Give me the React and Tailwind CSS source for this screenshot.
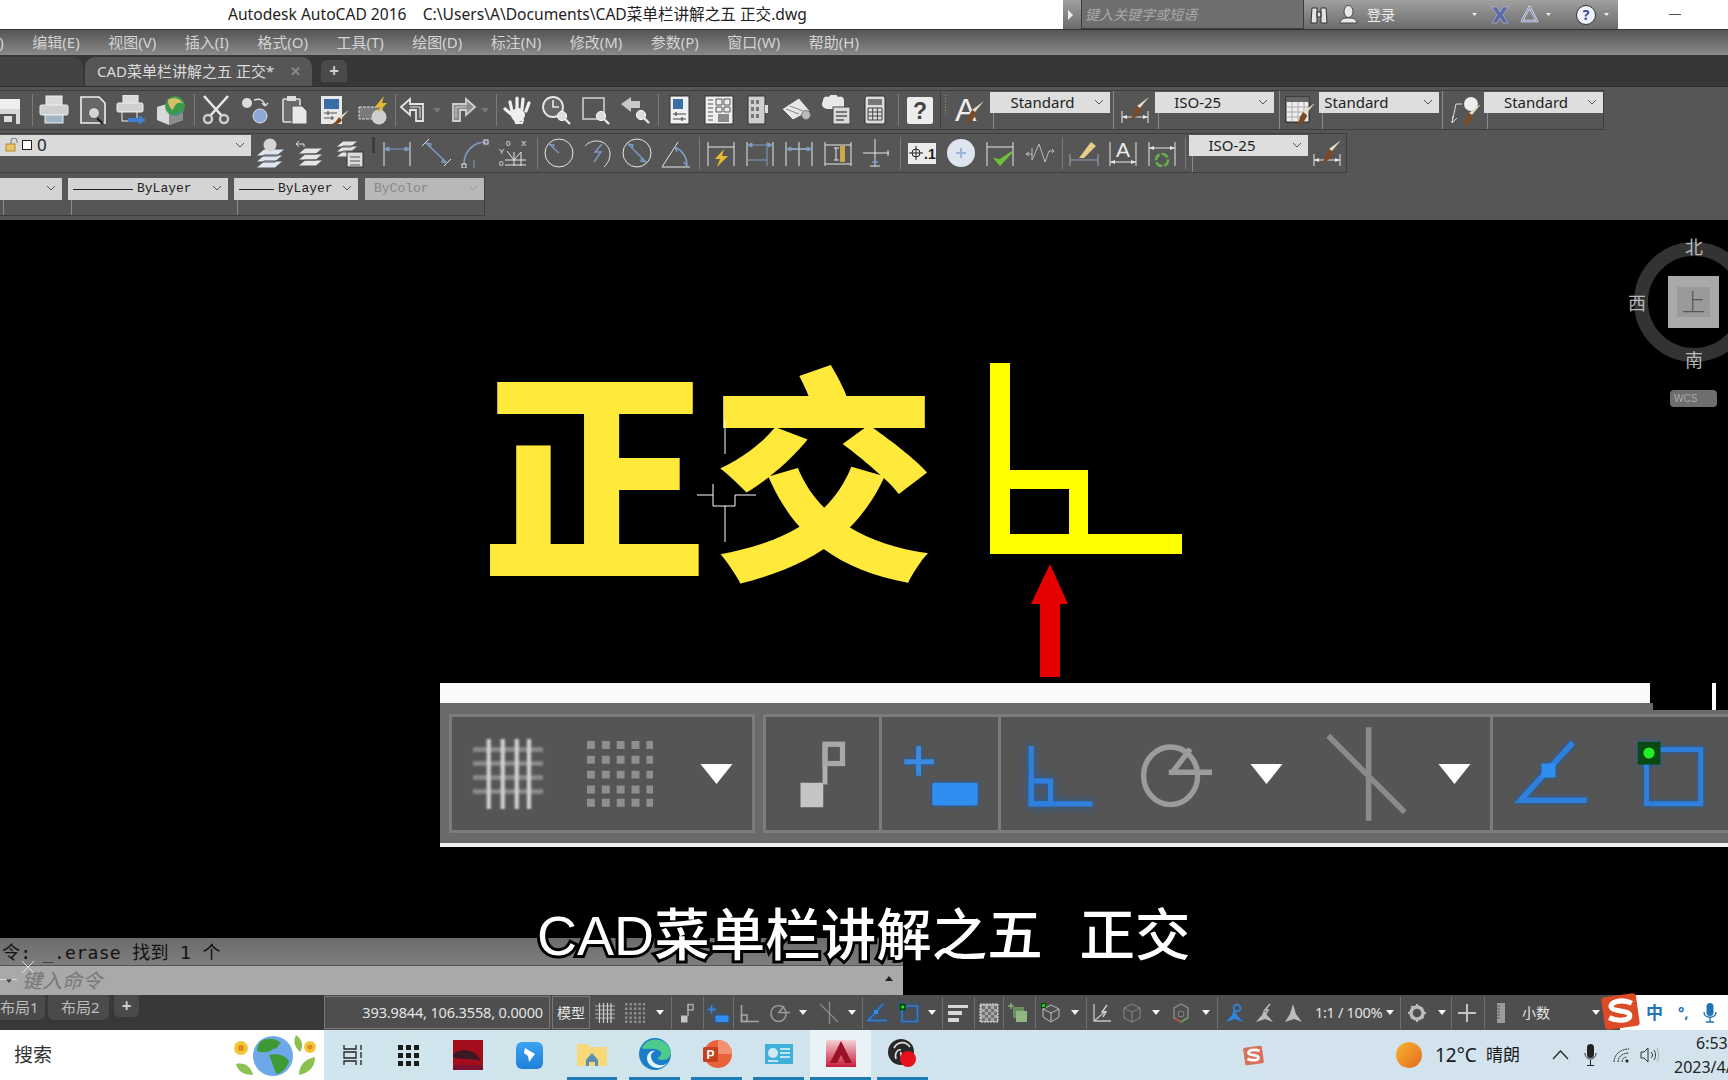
import React from "react";

const W = "#e6e6e6";
const BL = "#7f9cc4";

const Mag = ({ x = 20, y = 21 }) => (
  <>
    <path d={`M${x + 3} ${y + 3}l5 5`} stroke="#e8e8e8" strokeWidth="2.4" />
    <circle cx={x} cy={y} r="4.6" fill="#ddd" stroke="#fff" />
  </>
);
const Brush = ({ x = 0, y = 0 }) => (
  <g transform={`translate(${x} ${y})`}>
    <path d="M30 3l-9 11-3-2z" fill="#e8dcc4" />
    <path d="M18 12l4 3c-1 6-6 10-11 10 3-2 3-5 4-8z" fill="#7a4a26" />
  </g>
);
const Ext = ({ h = 28, c = W }) => (
  <path d={`M2 4V${h}M28 4V${h}`} stroke={c} strokeWidth="1" />
);
const Arrow = ({ y = 10, c = BL }) => (
  <path d={`M2 ${y}H28M2 ${y}l5-2v4zM28 ${y}l-5-2v4z`} stroke={c} fill={c} strokeWidth="1" />
);

const icons = {
  save: (
    <>
      <path d="M3 4H30V29H3z" fill="#d8d8d8" />
      <path d="M3 4H30V14H3z" fill="#efefef" />
      <rect x="6" y="19" width="20" height="10" fill="#555" />
      <rect x="14" y="21" width="8" height="6" fill="#ddd" />
    </>
  ),
  print: (
    <>
      <rect x="7" y="1" width="16" height="10" fill="#d9d9d9" stroke="#eee" />
      <rect x="1" y="10" width="28" height="10" rx="1.5" fill="#cfcfcf" stroke="#eee" />
      <rect x="6" y="20" width="18" height="8" fill="#9fb4c4" stroke="#eee" />
    </>
  ),
  preview: (
    <>
      <path d="M3 2H21L27 8V28H3z" fill="#676767" stroke="#eee" strokeWidth="1.6" />
      <path d="M19 23l6 6" stroke="#222" strokeWidth="2.4" />
      <circle cx="16" cy="18" r="5.5" fill="#d5d5d5" stroke="#555" />
    </>
  ),
  plot: (
    <>
      <rect x="7" y="0" width="15" height="9" fill="#d9d9d9" stroke="#eee" />
      <rect x="1" y="8" width="26" height="9" rx="1.5" fill="#cfcfcf" stroke="#eee" />
      <rect x="6" y="17" width="15" height="9" fill="#555" stroke="#eee" />
      <path d="M12 23H23V20L30 25 23 30V27H12z" fill="#3f7fce" />
    </>
  ),
  publish: (
    <>
      <path d="M1 12L14 8 27 14V25L13 30 1 25z" fill="#d9d9d9" />
      <path d="M13 18V30L27 25V14z" fill="#8d8d8d" />
      <circle cx="19" cy="11" r="10" fill="#3e9a4a" />
      <path d="M12 5c6-4 12-2 15 4-5-3-8 0-10 6-3-2-5-5-5-10z" fill="#d6c06a" />
      <path d="M14 19c5 2 10 0 13-5-1 5-7 9-13 5z" fill="#4a88cf" />
    </>
  ),
  cut: (
    <>
      <path d="M3 1L21 21M27 1L9 21" stroke="#e8e8e8" strokeWidth="2.6" />
      <circle cx="7" cy="24" r="4" stroke="#cfcfcf" strokeWidth="2.4" />
      <circle cx="23" cy="24" r="4" stroke="#cfcfcf" strokeWidth="2.4" />
    </>
  ),
  copy: (
    <>
      <circle cx="7" cy="8" r="5" fill="#dcdcdc" />
      <circle cx="20" cy="21" r="7" fill="#8eaad4" stroke="#d5e0f0" />
      <path d="M14 5c6-2 10 0 11 6M25 11l-3-3M25 11l3-3" stroke="#ddd" strokeWidth="1.4" />
    </>
  ),
  paste: (
    <>
      <rect x="3" y="4" width="17" height="23" rx="1" fill="#6c6c6c" stroke="#ddd" strokeWidth="1.6" />
      <rect x="7" y="1" width="9" height="5" fill="#ddd" />
      <path d="M12 11H22L27 16V29H12z" fill="#e8e8e8" stroke="#555" />
    </>
  ),
  match: (
    <>
      <rect x="2" y="1" width="21" height="28" fill="#e8e8e8" />
      <rect x="5" y="4" width="15" height="10" fill="#3a6ea8" />
      <path d="M5 18h13M5 23h10M9 16v4M13 21v4" stroke="#555" strokeWidth="1.2" />
      <path d="M30 15L22 24 20 22z" fill="#e8dcc4" />
      <path d="M20 22l3 3c-2 4-6 5-10 4 3-1 4-3 7-7z" fill="#7a4a26" />
    </>
  ),
  block: (
    <>
      <path d="M1 12H24V24H1z" fill="#7a7a7a" stroke="#ddd" strokeDasharray="3 1" />
      <circle cx="21" cy="22" r="7.5" fill="#cfcfcf" />
      <path d="M26 1L17 12H22L19 19 29 8H24z" fill="#e8b92f" />
    </>
  ),
  undo: (
    <>
      <path d="M2 12L11 4V9H24V26H17V15H11V20z" fill="#5f5f5f" stroke="#e4e4e4" strokeWidth="1.8" />
      <path d="M11 12H21V23" stroke="#e4e4e4" strokeWidth="1" />
    </>
  ),
  redo: (
    <>
      <path d="M28 12L19 4V9H6V26H13V15H19V20z" fill="#8b8b8b" stroke="#cfcfcf" strokeWidth="1.8" />
      <path d="M19 12H9V23" stroke="#cfcfcf" strokeWidth="1" />
    </>
  ),
  hand: (
    <g stroke="#f0f0f0" strokeLinecap="round" strokeWidth="3.2">
      <path d="M9 16L7 7M14 14V3M19 14L20 4M23 16L26 8M8 19L2 14" />
      <ellipse cx="15" cy="20" rx="6.5" ry="6.5" fill="#f0f0f0" strokeWidth="1" />
      <path d="M12 25l1 3h6l1-3" strokeWidth="2" />
    </g>
  ),
  rtzoom: (
    <>
      <circle cx="12" cy="12" r="10" fill="#666" stroke="#e8e8e8" strokeWidth="1.8" />
      <path d="M12 5V12H18" stroke="#e8e8e8" strokeWidth="1.6" />
      <Mag x={21} y={21} />
    </>
  ),
  winzoom: (
    <>
      <rect x="2" y="3" width="21" height="21" stroke="#ddd" strokeWidth="1.4" />
      <Mag x={20} y={21} />
    </>
  ),
  prevzoom: (
    <>
      <path d="M1 9L11 2V6H20V13H11V17z" fill="#c8c8c8" />
      <Mag x={21} y={20} />
    </>
  ),
  props: (
    <>
      <rect x="6" y="1" width="19" height="28" fill="#f0f0f0" stroke="#333" />
      <rect x="9" y="4" width="10" height="10" fill="#3a6ea8" />
      <path d="M9 19h13M9 24h13M12 17v4M18 22v4" stroke="#444" strokeWidth="1.2" />
    </>
  ),
  dc: (
    <>
      <rect x="1" y="1" width="28" height="28" fill="#eee" stroke="#333" />
      <path d="M4 5h5M4 9h5M4 13h5M4 17h5M4 21h5M4 25h5" stroke="#555" />
      <path d="M12 4h6v6h-6zM20 4h6v6h-6zM12 12h6v5h-6zM20 12h6v5h-6z" stroke="#555" />
      <rect x="14" y="19" width="11" height="8" fill="#8a8a8a" />
    </>
  ),
  palette: (
    <>
      <rect x="5" y="1" width="17" height="28" fill="#cfcfcf" stroke="#333" />
      <path d="M8 5h3v4H8zM13 5h3v4h-3zM8 12h3v4H8zM13 12h3v4h-3zM8 19h3v4H8zM13 19h3v4h-3z" fill="#777" />
      <path d="M22 10h3v8h-3z" fill="#ddd" />
    </>
  ),
  sheet: (
    <>
      <path d="M1 14L18 3 29 16 12 25z" fill="#e6e6e6" stroke="#555" />
      <circle cx="25" cy="20" r="4.4" fill="#bdbdbd" stroke="#777" />
      <path d="M5 14l13 5M9 11l13 5" stroke="#888" />
    </>
  ),
  markup: (
    <>
      <path d="M2 6a4 4 0 0 1 6-4 5 5 0 0 1 9 0 4 4 0 0 1 6 4v8H6a5 5 0 0 1-4-8z" fill="#e8e8e8" />
      <rect x="12" y="12" width="17" height="17" fill="#dadada" stroke="#444" />
      <path d="M15 17h11M15 21h11M15 25h8" stroke="#555" strokeWidth="1.4" />
    </>
  ),
  calc: (
    <>
      <rect x="5" y="1" width="20" height="28" rx="2" fill="#dcdcdc" stroke="#333" />
      <rect x="8" y="4" width="14" height="6" fill="#777" />
      <path d="M8 13h14v12H8zM8 17h14M8 21h14M12.7 13v12M17.4 13v12" stroke="#444" />
    </>
  ),
  help: (
    <>
      <rect x="2" y="2" width="26" height="27" rx="2" fill="#ececec" />
      <text x="15" y="24" textAnchor="middle" fontSize="23" fontWeight="700" fill="#444" fontFamily="Liberation Sans">?</text>
    </>
  ),
  astyle: (
    <>
      <text x="1" y="26" fontSize="32" fill="#f0f0f0" fontFamily="Liberation Sans">A</text>
      <Brush x={0} y={3} />
    </>
  ),
  dimbrush: (
    <>
      <path d="M2 16V28M28 16V28M2 22H28" stroke={W} />
      <path d="M2 22l5-2v4zM28 22l-5-2v4z" fill={W} />
      <Brush x={-1} y={-1} />
    </>
  ),
  table: (
    <>
      <rect x="2" y="2" width="23" height="25" fill="#eee" stroke="#222" />
      <rect x="2" y="2" width="23" height="5" fill="#666" />
      <path d="M2 12H25M2 17H25M2 22H25M8 7V27M14 7V27M20 7V27" stroke="#aaa" />
      <Brush x={1} y={5} />
    </>
  ),
  mleader: (
    <>
      <path d="M12 9H6L2 28M2 28l1-7M2 28l5-5" stroke="#ddd" />
      <circle cx="21" cy="9" r="7" fill="#eee" />
      <Brush x={1} y={6} />
    </>
  ),
  lay1: (
    <>
      <path d="M9 11H30L22 18H1zM9 17H28L20 24H1zM9 23H28L20 30H1z" fill="#dde6f0" stroke="#555" />
      <circle cx="15" cy="7" r="6.500" fill="#d4d4d4" />
    </>
  ),
  lay2: (
    <>
      <path d="M10 10H28L21 16H3zM10 16H28L21 22H3zM10 22H28L21 28H3z" fill="#e6e6e6" stroke="#555" />
      <path d="M1 6H9V9M1 6l3-3M1 6l3 3" stroke="#ddd" />
    </>
  ),
  lay3: (
    <>
      <path d="M9 3H24L17 9H2zM9 8H24L17 14H2zM9 13H20L15 19H2z" fill="#e6e6e6" stroke="#555" />
      <rect x="13" y="14" width="16" height="15" fill="#dcdcdc" stroke="#333" />
      <path d="M16 19h10M16 23h10M16 27h10" stroke="#555" />
    </>
  ),
  dimlin: (
    <>
      <Ext />
      <Arrow y={11} />
    </>
  ),
  dimali: (
    <>
      <path d="M1 8L8 1M23 28L30 21" stroke={W} />
      <path d="M5 5L26 25M5 5l5 1-1 3M26 25l-5-1 1-3" stroke={BL} strokeWidth="1.4" />
    </>
  ),
  dimarc: (
    <>
      <path d="M4 26C4 13 14 4 26 4" stroke={BL} strokeWidth="1.6" />
      <rect x="24" y="2" width="4" height="4" stroke={W} />
      <rect x="2" y="26" width="4" height="4" stroke={W} />
      <path d="M14 22V30" stroke={BL} />
    </>
  ),
  dimord: (
    <>
      <path d="M6 22H27M6 27H27M15 14V28M22 14V28M8 13L15 22L22 14" stroke={W} />
      <text x="7" y="8" fontSize="8" fill={W} fontFamily="Liberation Sans">0</text>
      <text x="22" y="8" fontSize="8" fill={W} fontFamily="Liberation Sans">X</text>
      <text x="0" y="16" fontSize="8" fill={W} fontFamily="Liberation Sans">Y</text>
      <text x="0" y="28" fontSize="8" fill={W} fontFamily="Liberation Sans">0</text>
    </>
  ),
  dimrad: (
    <>
      <circle cx="15" cy="15" r="14" stroke={W} />
      <path d="M15 15L5 6M5 6l5 1-1 3" stroke={BL} strokeWidth="1.2" />
    </>
  ),
  dimjog: (
    <>
      <path d="M3 8C10 0 26 1 28 15C28 21 26 25 22 29" stroke={W} />
      <path d="M20 6L13 14H19L12 24" stroke={BL} strokeWidth="1.4" />
    </>
  ),
  dimdia: (
    <>
      <circle cx="15" cy="15" r="14" stroke={W} />
      <path d="M6 6L24 24M6 6l5 1-1 3M24 24l-5-1 1-3" stroke={BL} strokeWidth="1.4" />
    </>
  ),
  dimang: (
    <>
      <path d="M1 29H29M1 29L17 4" stroke={W} />
      <path d="M14 9C22 13 26 20 26 28M14 9l2 5M26 28l-3-4" stroke={BL} strokeWidth="1.4" />
    </>
  ),
  dimqk: (
    <>
      <Ext />
      <path d="M2 9H28" stroke={W} />
      <path d="M18 11L9 21H14L11 29 22 18H16z" fill="#e8b92f" />
    </>
  ),
  dimbase: (
    <>
      <Ext />
      <Arrow y={7} />
      <path d="M2 22H22M22 4V28" stroke={BL} />
    </>
  ),
  dimcont: (
    <>
      <path d="M2 4V28M15 4V28M28 4V28M2 11H28" stroke={W} />
      <Arrow y={11} />
    </>
  ),
  dimspace: (
    <>
      <Ext />
      <path d="M2 7H28M2 26H28" stroke={W} />
      <rect x="17" y="8" width="5" height="16" fill="#c9a94a" />
      <path d="M11 10h5M11 22h5M13 10v12" stroke={W} />
    </>
  ),
  dimbreak: (
    <>
      <path d="M13 1V29M1 15H27M26 12v6M8 28h10" stroke={W} />
      <path d="M13 20v8M10 24h6" stroke={BL} strokeWidth="1.4" />
    </>
  ),
  tol: (
    <>
      <rect x="1" y="5" width="28" height="21" fill="#ececec" />
      <circle cx="9" cy="15" r="4" stroke="#222" />
      <path d="M2 15H16M9 8V22" stroke="#222" />
      <text x="17" y="21" fontSize="14" fontWeight="700" fill="#222" fontFamily="Liberation Sans">.1</text>
    </>
  ),
  center: (
    <>
      <circle cx="15" cy="15" r="14" fill="#dfe5ee" />
      <path d="M15 10V20M10 15H20" stroke="#9cb6dc" strokeWidth="2" />
    </>
  ),
  dimchk: (
    <>
      <Ext />
      <path d="M2 9H28" stroke={W} />
      <path d="M10 21L15 27L27 14L15 22z" fill="#6fbf3c" stroke="#6fbf3c" strokeWidth="1.6" />
    </>
  ),
  dimzag: <path d="M1 16H7M4 14L1 16L4 18M7 10V22L14 6L20 24L24 13H29M27 11l2 2-2 2" stroke="#bbb" />,
  dimedit: (
    <>
      <path d="M1 16V28M29 16V28M1 22H29" stroke="#8fa2b8" />
      <path d="M10 20L22 4L27 8L15 20z" fill="#e8cf88" />
    </>
  ),
  dima: (
    <>
      <Ext />
      <path d="M2 24H28" stroke={W} />
      <path d="M2 24l5-2v4zM28 24l-5-2v4z" fill={W} />
      <text x="15" y="19" textAnchor="middle" fontSize="21" fill="#eee" fontFamily="Liberation Sans">A</text>
    </>
  ),
  dimnext: (
    <>
      <Ext />
      <path d="M2 10H28" stroke={W} />
      <path d="M2 10l5-2v4zM28 10l-5-2v4z" fill={W} />
      <circle cx="15" cy="22" r="6" stroke="#63b050" strokeWidth="2.6" strokeDasharray="7 2" />
    </>
  ),
  brushdim: (
    <>
      <path d="M2 16V28M28 16V28M2 22H28" stroke={W} />
      <path d="M2 22l5-2v4zM28 22l-5-2v4z" fill={W} />
      <Brush x={-1} y={-1} />
    </>
  ),
};

const row1 = [
  ["-ml-[10px]", "save"], ["ml-[12px]", "|"], ["ml-[6px]", "print"], ["ml-[9px]", "preview"], ["ml-[8px]", "plot"],
  ["ml-[10px]", "publish"], ["ml-[8px]", "|"], ["ml-[6px]", "cut"], ["ml-[9px]", "copy"], ["ml-[10px]", "paste"],
  ["ml-[9px]", "match"], ["ml-[9px]", "block"], ["ml-[7px]", "|"], ["ml-[3px]", "undo"], ["ml-[4px]", "v"],
  ["ml-[6px]", "redo"], ["ml-[4px]", "v"], ["ml-[7px]", "|"], ["ml-[6px]", "hand"], ["ml-[8px]", "rtzoom"],
  ["ml-[10px]", "winzoom"], ["ml-[9px]", "prevzoom"], ["ml-[8px]", "|"], ["ml-[5px]", "props"], ["ml-[10px]", "dc"],
  ["ml-[9px]", "palette"], ["ml-[8px]", "sheet"], ["ml-[10px]", "markup"], ["ml-[9px]", "calc"], ["ml-[8px]", "|"],
  ["ml-[6px]", "help"],
];

const row2 = [
  ["ml-[4px]", "lay1"], ["ml-[10px]", "lay2"], ["ml-[9px]", "lay3"],
];

const row2b = [
  ["ml-[7px]", "dimlin"], ["ml-[9px]", "dimali"], ["ml-[9px]", "dimarc"], ["ml-[9px]", "dimord"], ["ml-[8px]", "|"],
  ["ml-[6px]", "dimrad"], ["ml-[8px]", "dimjog"], ["ml-[10px]", "dimdia"], ["ml-[9px]", "dimang"], ["ml-[8px]", "|"],
  ["ml-[6px]", "dimqk"], ["ml-[9px]", "dimbase"], ["ml-[9px]", "dimcont"], ["ml-[9px]", "dimspace"], ["ml-[9px]", "dimbreak"],
  ["ml-[8px]", "|"], ["ml-[6px]", "tol"], ["ml-[9px]", "center"], ["ml-[9px]", "dimchk"], ["ml-[10px]", "dimzag"],
  ["ml-[7px]", "|"], ["ml-[6px]", "dimedit"], ["ml-[9px]", "dima"], ["ml-[9px]", "dimnext"], ["ml-[8px]", "|"],
];

const Tri = ({ c = "", fill = "#f4f4f4" }) => (
  <svg viewBox="0 0 8 5" className={`shrink-0 w-[8px] h-[5px] ${c}`}>
    <path d="M0 0H8L4 5z" fill={fill} />
  </svg>
);

const Tool = ({ m, k }) => {
  if (k === "|") return <div className={`${m} shrink-0 w-px h-[32px] bg-[#7a7a7a]`} />;
  if (k === "v") return <Tri c={m} fill="#777" />;
  return (
    <svg viewBox="0 0 30 30" fill="none" className={`${m} shrink-0 w-[30px] h-[30px]`}>
      {icons[k]}
    </svg>
  );
};

const Chevron = ({ dim }) => (
  <svg viewBox="0 0 10 6" fill="none" className="absolute right-[6px] top-[7px] w-[10px] h-[6px]">
    <path d="M1 1L5 5L9 1" stroke={dim ? "#999" : "#555"} />
  </svg>
);

const Combo = ({ c, label, align = "justify-center pr-[15px]", lineX = "ml-[3px]" }) => (
  <div className={`${c} shrink-0 h-full flex flex-col`}>
    <div className={`relative h-[21px] mt-px bg-[#dedede] flex items-center ${align} text-[15px] text-[#222]`}>
      {label}
      <Chevron />
    </div>
    <div className={`${lineX} w-px flex-1 bg-[#8a8a8a]`} />
  </div>
);

const LineCombo = ({ c, line, text }) => (
  <div className={`${c} shrink-0 h-full flex flex-col`}>
    <div className="relative h-[22px] mt-[2px] bg-[#d4d4d4] flex items-center pl-[5px] text-[13px] text-[#222] [font-family:'Liberation_Mono',monospace]">
      <div className={`${line} h-px bg-[#222] mr-[4px]`} />
      {text}
      <Chevron />
    </div>
    <div className="ml-[3px] w-px flex-1 bg-[#8a8a8a]" />
  </div>
);

/* status bar drawings, shared with the enlarged strip */
const GridIcon = ({ c }) => (
  <svg viewBox="0 0 20 20" fill="none" className={c}>
    <path d="M0 3H20M0 7H20M0 11H20M0 15H20" stroke="#8e8e8e" strokeWidth="1.3" />
    <path d="M4.5 0V20M8.5 0V20M12.5 0V20M16 0V20" stroke="#d0d0d0" strokeWidth="1.2" />
  </svg>
);
const DotsIcon = ({ c }) => (
  <svg viewBox="0 0 20 20" className={c}>
    <path fill="#8f8f8f" d="M0 0h2.400v2.400H0zM4.500 0h2.400v2.400H4.500zM9 0h2.400v2.400H9zM13.500 0h2.400v2.400h-2.400zM18 0h2v2.400h-2zM0 4.500h2.400v2.400H0zM4.500 4.500h2.400v2.400H4.500zM9 4.500h2.400v2.400H9zM13.500 4.500h2.400v2.400h-2.400zM18 4.500h2v2.400h-2zM0 9h2.400v2.400H0zM4.500 9h2.400v2.400H4.500zM9 9h2.400v2.400H9zM13.500 9h2.400v2.400h-2.400zM18 9h2v2.400h-2zM0 13.500h2.400v2.400H0zM4.500 13.500h2.400v2.400H4.500zM9 13.500h2.400v2.400H9zM13.500 13.500h2.400v2.400h-2.400zM18 13.500h2v2.400h-2zM0 17.500h2.400v2.400H0zM4.500 17.500h2.400v2.400H4.500zM9 17.500h2.400v2.400H9zM13.500 17.500h2.400v2.400h-2.400zM18 17.500h2v2.400h-2z" />
  </svg>
);
const SnapIcon = ({ c }) => (
  <svg viewBox="0 0 20 20" fill="none" className={c}>
    <rect x="3" y="12.5" width="6.5" height="7" fill="#c4c4c4" />
    <path d="M10 13V2" stroke="#b0b0b0" strokeWidth="1.4" />
    <rect x="10" y="1.5" width="5" height="5.5" stroke="#a8a8a8" strokeWidth="1.5" />
  </svg>
);
const DynIcon = ({ c }) => (
  <svg viewBox="0 0 22 20" fill="none" className={`${c} drop-shadow-[0_0_2px_#1a5fb0]`}>
    <path d="M4.6 2V10.5M0.5 6.5H9" stroke="#3a8be0" strokeWidth="1.4" />
    <rect x="8.5" y="12.5" width="13" height="6.5" rx="0.6" fill="#2f8ef0" />
  </svg>
);
const OrthoIcon = ({ c, color = "#2f7fdc", glow = "" }) => (
  <svg viewBox="0 0 20 20" fill="none" stroke={color} strokeWidth="1.5" className={`${c} ${glow}`}>
    <path d="M1.5 2V18.5H19" />
    <rect x="1.5" y="12" width="5.5" height="6.500" />
  </svg>
);
const PolarIcon = ({ c }) => (
  <svg viewBox="0 0 20 20" fill="none" stroke="#9c9c9c" strokeWidth="1.5" className={c}>
    <ellipse cx="8.5" cy="10.5" rx="7.5" ry="8" />
    <path d="M8 9.5H20M9 9.5L14 3" />
  </svg>
);
const CrossIcon = ({ c }) => (
  <svg viewBox="0 0 20 22" fill="none" stroke="#8b8b8b" strokeWidth="1.3" className={c}>
    <path d="M10.5 0V22M1 2L19 20" />
  </svg>
);
const AngleIcon = ({ c }) => (
  <svg viewBox="0 0 20 20" fill="none" className={`${c} drop-shadow-[0_0_2px_#1a5fb0]`}>
    <path d="M16 1L1 17.5H20" stroke="#2f7fdc" strokeWidth="1.6" />
    <rect x="7" y="7" width="4" height="4" fill="#2f8ef0" />
  </svg>
);
const BoxIcon = ({ c }) => (
  <svg viewBox="0 0 20 20" fill="none" className={`${c} drop-shadow-[0_0_2px_#1a5fb0]`}>
    <rect x="3" y="3" width="15.5" height="15.5" stroke="#2f7fdc" strokeWidth="1.4" />
    <rect x="0.5" y="0.8" width="6.5" height="6.5" fill="#0a4a12" />
    <circle cx="3.7" cy="4" r="1.6" fill="#22ee22" />
  </svg>
);

const Sep = ({ c }) => <div className={`${c} shrink-0 w-px h-[32px] bg-[#707070]`} />;

const StatusBar = () => (
  <div className="flex-1 h-full flex items-center bg-[#4e4e4e] text-[#e4e4e4] overflow-hidden">
    <div className="shrink-0 w-[226px] h-[33px] border border-[#787878] flex items-center justify-end pr-[6px] text-[14.500px] tracking-[-0.15px]">
      393.9844, 106.3558, 0.0000
    </div>
    <div className="shrink-0 ml-[2px] w-[38px] h-[33px] border border-[#787878] flex items-center justify-center text-[14px]">模型</div>
    <GridIcon c="shrink-0 ml-[5px] w-[20px] h-[20px]" />
    <DotsIcon c="shrink-0 ml-[10px] w-[20px] h-[20px]" />
    <Tri c="ml-[11px]" />
    <Sep c="ml-[7px]" />
    <SnapIcon c="shrink-0 ml-[6px] w-[20px] h-[20px]" />
    <Sep c="ml-[5px]" />
    <DynIcon c="shrink-0 ml-[3px] w-[22px] h-[20px]" />
    <Sep c="ml-[4px]" />
    <OrthoIcon c="shrink-0 ml-[6px] w-[20px] h-[20px]" color="#a8a8a8" />
    <PolarIcon c="shrink-0 ml-[10px] w-[20px] h-[20px]" />
    <Tri c="ml-[9px]" />
    <CrossIcon c="shrink-0 ml-[12px] w-[20px] h-[22px]" />
    <Tri c="ml-[9px]" />
    <Sep c="ml-[6px]" />
    <AngleIcon c="shrink-0 ml-[4px] w-[20px] h-[20px]" />
    <BoxIcon c="shrink-0 ml-[12px] w-[20px] h-[20px]" />
    <Tri c="ml-[9px]" />
    <Sep c="ml-[6px]" />
    <svg viewBox="0 0 20 20" className="shrink-0 ml-[5px] w-[20px] h-[20px]">
      <path d="M0 2H20V5H0zM0 8H14V12H0zM0 15H11V19H0z" fill="#d8d8d8" />
    </svg>
    <Sep c="ml-[6px]" />
    <svg viewBox="0 0 20 20" className="shrink-0 ml-[4px] w-[20px] h-[20px]">
      <rect x="1" y="1" width="18" height="18" fill="#a9a9a9" stroke="#ddd" strokeDasharray="2 1" />
      <path d="M3 3h3v3H3zM9 3h3v3H9zM15 3h3v3h-3zM6 6h3v3H6zM12 6h3v3h-3zM3 9h3v3H3zM9 9h3v3H9zM15 9h3v3h-3zM6 12h3v3H6zM12 12h3v3h-3zM3 15h3v3H3zM9 15h3v3H9zM15 15h3v3h-3z" fill="#707070" />
    </svg>
    <Sep c="ml-[4px]" />
    <svg viewBox="0 0 20 20" fill="none" className="shrink-0 ml-[4px] w-[20px] h-[20px]">
      <path d="M3 0V6M0 3H6" stroke="#9ed08a" />
      <rect x="5" y="4" width="11" height="11" fill="#6f8d62" />
      <rect x="8" y="8" width="11" height="11" fill="#8fb880" />
    </svg>
    <Sep c="ml-[7px]" />
    <svg viewBox="0 0 20 20" fill="none" stroke="#bdbdbd" className="shrink-0 ml-[5px] w-[20px] h-[20px]">
      <path d="M10 2L18 6V14L10 19L2 14V6zM2 6L10 10L18 6M10 10V19" />
      <rect x="0" y="0" width="5" height="5" fill="#0a4a12" stroke="none" />
      <rect x="1.2" y="1.2" width="2.6" height="2.6" fill="#22ee22" stroke="none" />
    </svg>
    <Tri c="ml-[10px]" />
    <Sep c="ml-[7px]" />
    <svg viewBox="0 0 20 20" fill="none" stroke="#c4c4c4" strokeWidth="1.3" className="shrink-0 ml-[5px] w-[20px] h-[20px]">
      <path d="M2 1V18H19M2 18L14 8" />
      <path d="M15 2L10 9H14L11 14" stroke="#d8d8d8" />
    </svg>
    <svg viewBox="0 0 20 20" fill="none" stroke="#888" className="shrink-0 ml-[10px] w-[20px] h-[20px]">
      <path d="M10 1L18 5V15L10 19L2 15V5zM2 5L10 9L18 5M10 9V19" />
    </svg>
    <Tri c="ml-[10px]" />
    <svg viewBox="0 0 20 20" fill="none" className="shrink-0 ml-[11px] w-[20px] h-[20px]">
      <path d="M10 1L17 5V15L10 19L3 15V5z" stroke="#8b8b8b" strokeWidth="1.4" />
      <path d="M4 15L10 19" stroke="#b0543c" strokeWidth="1.6" />
      <path d="M16 15L10 19" stroke="#5f9a55" strokeWidth="1.6" />
      <circle cx="10" cy="11" r="3" stroke="#888" />
    </svg>
    <Tri c="ml-[11px]" />
    <Sep c="ml-[7px]" />
    <svg viewBox="0 0 20 20" className="shrink-0 ml-[6px] w-[20px] h-[20px]">
      <path d="M10 7L13 12L19 19L11 16L2 19L8 12z" fill="#2f86dc" />
      <circle cx="13" cy="5" r="3.4" fill="none" stroke="#2f86dc" strokeWidth="1.8" />
    </svg>
    <svg viewBox="0 0 20 20" className="shrink-0 ml-[10px] w-[20px] h-[20px]">
      <path d="M10 7L13 12L19 19L11 16L2 19L8 12z" fill="#bbb" />
      <path d="M16 1L11 7H14L11 12" fill="none" stroke="#bbb" strokeWidth="1.6" />
    </svg>
    <svg viewBox="0 0 20 20" className="shrink-0 ml-[9px] w-[20px] h-[20px]">
      <path d="M10 1L13 11L19 19L11 16L2 19L7 11z" fill="#bbb" />
    </svg>
    <div className="shrink-0 ml-[12px] w-[65px] text-[14.500px] whitespace-nowrap tracking-[-0.3px]">1:1 / 100%</div>
    <Tri c="ml-[6px]" />
    <Sep c="ml-[6px]" />
    <svg viewBox="0 0 20 20" className="shrink-0 ml-[6px] w-[20px] h-[20px]">
      <circle cx="10" cy="10" r="6" fill="none" stroke="#bbb" strokeWidth="3.4" />
      <path d="M9 1h2v3H9zM9 16h2v3H9zM1 9h3v2H1zM16 9h3v2h-3zM3.5 3.5l2-1 1.5 2-2 1zM14 14l2-1 1 2-2 1zM14 4l2 1-1 2-2-1zM3.5 15l2-2 1 2-2 1z" fill="#bbb" />
    </svg>
    <Tri c="ml-[11px]" />
    <Sep c="ml-[5px]" />
    <svg viewBox="0 0 20 20" fill="none" className="shrink-0 ml-[5px] w-[20px] h-[20px]">
      <path d="M10 1V19M1 10H19" stroke="#c4c4c4" strokeWidth="2" />
    </svg>
    <Sep c="ml-[7px]" />
    <svg viewBox="0 0 20 20" className="shrink-0 ml-[6px] w-[20px] h-[20px]">
      <rect x="6" y="0" width="8" height="20" fill="#9b9b9b" />
      <path d="M6 3h3M6 6h3M6 9h3M6 12h3M6 15h3" stroke="#555" />
    </svg>
    <div className="shrink-0 ml-[11px] w-[29px] text-[14px] whitespace-nowrap">小数</div>
    <Tri c="ml-[41px]" />
    <div className="shrink-0 ml-[20px] w-[108px] h-full bg-white flex items-center text-[#1f74b8]">
      <span className="ml-[26px] text-[17px] font-bold">中</span>
      <span className="ml-[15px] text-[15px] font-bold">°,</span>
      <svg viewBox="0 0 14 20" fill="none" className="ml-[14px] w-[14px] h-[20px]">
        <rect x="3.5" y="0" width="7" height="13" rx="3.5" fill="#1f74b8" />
        <path d="M1 9c0 7 12 7 12 0M7 15v4M3 19h8" stroke="#1f74b8" strokeWidth="1.4" />
      </svg>
    </div>
  </div>
);

const SogouS = ({ c, small }) => (
  <svg viewBox="0 0 38 38" className={c}>
    <rect x="2" y="3" width="34" height="32" rx="3" fill={small ? "#d9705a" : "#dd4b26"} transform="rotate(-8 19 19)" />
    <path d="M30 11C20 6 8 10 10 15C12 20 28 17 28 23C28 28 16 29 8 25" fill="none" stroke="#fff" strokeWidth="5" />
  </svg>
);

const AppSlot = ({ c, children }) => (
  <div className={`${c} shrink-0 h-full flex items-center justify-center border-b-[3px] border-[#1f7bb3]`}>{children}</div>
);

const Taskbar = () => (
  <div className="h-[50px] flex items-center bg-linear-to-r from-[#cfe5ec] to-[#d3e3ee] overflow-hidden text-[#1a1a1a]">
    <div className="shrink-0 w-[324px] h-full bg-white flex items-center justify-between">
      <span className="ml-[14px] text-[19px] text-[#333]">搜索</span>
      <svg viewBox="0 0 88 44" className="w-[88px] h-[44px] mr-[5px]">
        <circle cx="10" cy="15" r="7" fill="#f2c53a" />
        <circle cx="10" cy="15" r="3" fill="#e08a20" />
        <circle cx="79" cy="14" r="6" fill="#f2c53a" />
        <circle cx="79" cy="14" r="2.6" fill="#e08a20" />
        <path d="M5 31C14 29 20 34 22 42C12 42 7 38 5 31z" fill="#8cc152" />
        <path d="M68 42C68 32 74 26 84 24C84 34 78 40 68 42z" fill="#8cc152" />
        <path d="M65 2C71 6 73 13 69 19C63 13 62 8 65 2z" fill="#8cc152" />
        <circle cx="42" cy="23" r="20" fill="#6fa8e8" />
        <path d="M30 8C38 4 46 6 50 10C46 12 48 16 42 16C38 20 32 20 26 18C26 14 28 10 30 8zM38 22C46 20 54 22 58 28C56 36 50 40 46 41C42 36 42 30 38 22z" fill="#3e9a34" />
      </svg>
    </div>
    <svg viewBox="0 0 21 20" fill="none" stroke="#222" className="shrink-0 ml-[19px] w-[21px] h-[20px]">
      <path d="M1 0V4H13V0M1 7H13V13H1zM1 20V16H13V20M18 0V5M18 7V13M18 15V20" strokeWidth="1.3" />
    </svg>
    <svg viewBox="0 0 21 21" className="shrink-0 ml-[34px] w-[21px] h-[21px]">
      <path d="M0 0h5v5H0zM8 0h5v5H8zM16 0h5v5h-5zM0 8h5v5H0zM8 8h5v5H8zM16 8h5v5h-5zM0 16h5v5H0zM8 16h5v5H8zM16 16h5v5h-5z" fill="#1a1a1a" />
    </svg>
    <svg viewBox="0 0 30 30" className="shrink-0 ml-[34px] w-[30px] h-[30px]">
      <rect width="30" height="30" fill="#a30d1c" />
      <path d="M0 14C6 9 14 9 20 12C24 14 26 18 28 21C20 18 10 20 0 17z" fill="#3d1a22" />
      <rect y="25" width="30" height="5" fill="#7c1030" />
    </svg>
    <div className="shrink-0 ml-[33px] w-[27px] h-[27px] rounded-[6px] bg-linear-to-b from-[#3aa4f0] to-[#1f7fd8] flex items-center justify-center">
      <svg viewBox="0 0 14 16" className="w-[14px] h-[16px]">
        <path d="M2 1L12 7L6 15L5 9L1 6z" fill="#fff" />
      </svg>
    </div>
    <AppSlot c="ml-[24px] w-[50px]">
      <svg viewBox="0 0 30 24" className="w-[30px] h-[24px]">
        <path d="M0 2H11L13 5H30V24H0z" fill="#f5d878" />
        <path d="M9 18L15 11L21 18V24H18V20H12V24H9z" fill="#5a8fb8" />
      </svg>
    </AppSlot>
    <AppSlot c="ml-[12px] w-[51px]">
      <svg viewBox="0 0 32 32" className="w-[32px] h-[32px]">
        <circle cx="16" cy="16" r="16" fill="#1a7fc8" />
        <path d="M3 10C8 -2 28 -2 32 14C32 22 22 24 18 20C24 18 24 12 16 11C10 10 5 12 3 10z" fill="#4ecb8a" />
        <path d="M12 18C12 26 22 30 28 25C22 34 8 30 8 20C8 16 12 12 16 13C13 14 12 16 12 18z" fill="#e6f4fb" />
      </svg>
    </AppSlot>
    <AppSlot c="ml-[11px] w-[51px]">
      <svg viewBox="0 0 30 30" className="w-[30px] h-[30px]">
        <circle cx="16" cy="15" r="14" fill="#e8623c" />
        <path d="M16 1A14 14 0 0 1 30 15H16z" fill="#f39070" />
        <rect x="1" y="8" width="15" height="15" rx="1.5" fill="#c4401f" />
        <text x="8.5" y="20" textAnchor="middle" fontSize="12" fontWeight="700" fill="#fff" fontFamily="Liberation Sans">P</text>
      </svg>
    </AppSlot>
    <AppSlot c="ml-[11px] w-[51px]">
      <svg viewBox="0 0 28 20" className="w-[28px] h-[20px]">
        <rect x="0" y="0" width="28" height="20" fill="#3fb0dc" />
        <circle cx="8" cy="9" r="5" fill="#cfeaf5" />
        <path d="M15 5h10M15 9h10M15 13h10M3 17h10" stroke="#e8f6fb" strokeWidth="1.4" />
      </svg>
    </AppSlot>
    <AppSlot c="ml-[6px] w-[61px] bg-[#e9f2f6]">
      <svg viewBox="0 0 30 27" className="w-[30px] h-[27px]">
        <defs>
          <linearGradient id="acadbg" x1="0" y1="0" x2="0" y2="1">
            <stop offset="0" stopColor="#f3d0d5" />
            <stop offset="1" stopColor="#c81e3c" />
          </linearGradient>
        </defs>
        <rect width="30" height="27" fill="url(#acadbg)" />
        <path d="M15 1L26 23H19L15 15L11 23H4z" fill="#9c1028" />
      </svg>
    </AppSlot>
    <AppSlot c="ml-[6px] w-[51px]">
      <svg viewBox="0 0 30 30" className="w-[30px] h-[30px]">
        <circle cx="13" cy="13" r="13" fill="#282828" />
        <path d="M6 9C10 2 18 2 22 8M8 20C6 14 10 10 13 11M20 20C16 22 12 18 13 13" fill="none" stroke="#ddd" strokeWidth="1.6" />
        <circle cx="20" cy="20" r="8" fill="#e8101c" />
      </svg>
    </AppSlot>
    <SogouS small c="shrink-0 ml-[315px] w-[21px] h-[21px]" />
    <div className="shrink-0 ml-[132px] w-[26px] h-[26px] rounded-full bg-linear-to-br from-[#f6b52f] to-[#e36a1e]" />
    <span className="shrink-0 ml-[13px] w-[38px] text-[19px] whitespace-nowrap">12°C</span>
    <span className="shrink-0 ml-[13px] w-[34px] text-[17px] whitespace-nowrap">晴朗</span>
    <svg viewBox="0 0 17 10" fill="none" className="shrink-0 ml-[32px] w-[17px] h-[10px]">
      <path d="M1 9L8.5 1L16 9" stroke="#222" strokeWidth="1.2" />
    </svg>
    <svg viewBox="0 0 13 22" fill="none" className="shrink-0 ml-[15px] w-[13px] h-[22px]">
      <rect x="3" y="0" width="7" height="14" rx="3.5" fill="#222" />
      <path d="M1 9c0 8 11 8 11 0M6.5 16v5M3 21.500h7" stroke="#222" />
    </svg>
    <svg viewBox="0 0 17 15" fill="none" stroke="#333" className="shrink-0 ml-[16px] w-[17px] h-[15px]">
      <path d="M1 14C1 7 7 1 16 1M5 14C5 9 9 5 16 5M9 14C9 11 11 9 14 9" strokeDasharray="2 0.6" />
      <circle cx="14" cy="13" r="1.2" fill="#333" />
    </svg>
    <svg viewBox="0 0 19 16" fill="none" stroke="#333" className="shrink-0 ml-[10px] w-[19px] h-[16px]">
      <path d="M1 5H4L8 1V15L4 11H1zM11 5C13 7 13 9 11 11M14 3C16 6 16 10 14 13" />
      <path d="M17 1C19 5 19 11 17 15" stroke="#aaa" />
    </svg>
    <div className="shrink-0 ml-[15px] w-[54px] overflow-hidden text-[16px] leading-[24px] whitespace-nowrap text-[#222]">
      <div className="pl-[22px]">6:53</div>
      <div>2023/4/</div>
    </div>
  </div>
);

export default function App() {
  return (
    <div className="relative w-[1728px] h-[1080px] flex flex-col overflow-hidden bg-black [font-family:'Noto_Sans','Noto_Sans_CJK_SC',sans-serif]">
      {/* title bar */}
      <div className="h-[30px] flex items-stretch bg-white border-b border-[#333]">
        <div className="w-[1063px] pl-[228px] flex items-center text-[15.600px] text-[#222] whitespace-pre">
          {"Autodesk AutoCAD 2016    C:\\Users\\A\\Documents\\CAD菜单栏讲解之五 正交.dwg"}
        </div>
        <div className="w-[555px] flex items-center bg-linear-to-b from-[#a0a0a0] to-[#6c6c6c]">
          <svg viewBox="0 0 5 10" className="ml-[5px] w-[5px] h-[10px]">
            <path d="M0 0L5 5L0 10z" fill="#eee" />
          </svg>
          <div className="ml-[8px] w-[223px] h-full bg-[#6e6e6e] border border-[#3c3c3c] border-t-0 flex items-center pl-[3px] text-[14px] italic text-[#a9a9a9]">
            键入关键字或短语
          </div>
          <svg viewBox="0 0 18 18" className="ml-[6px] w-[18px] h-[18px]">
            <path d="M2 2H7V17H1zM11 2H16L17 17H11zM7 6H11V11H7z" fill="#e4e4e4" stroke="#333" />
          </svg>
          <svg viewBox="0 0 19 19" className="ml-[11px] w-[19px] h-[19px]">
            <ellipse cx="9.500" cy="6.500" rx="4.500" ry="6" fill="#e8e8e8" stroke="#444" />
            <path d="M1 18C2 13 6 13 9.500 13C13 13 17 13 18 18z" fill="#e8e8e8" stroke="#444" />
          </svg>
          <span className="ml-[9px] text-[14px] text-[#eee]">登录</span>
          <Tri c="ml-[77px] w-[5px]! h-[3px]!" />
          <svg viewBox="0 0 18 18" className="ml-[14px] w-[18px] h-[18px]">
            <path d="M1 1H6L9 6L12 1H17L12 9L17 17H12L9 12L6 17H1L6 9z" fill="#5d6aa8" stroke="#c8cfe8" strokeWidth="0.5" />
          </svg>
          <svg viewBox="0 0 19 19" fill="none" className="ml-[11px] w-[19px] h-[19px]">
            <path d="M9.500 2L17 16H2z" stroke="#dfe3f2" strokeWidth="2.400" strokeLinejoin="round" />
            <path d="M9.500 2L17 16H2z" stroke="#5d6aa8" strokeWidth="0.8" />
          </svg>
          <Tri c="ml-[7px] w-[5px]! h-[3px]!" />
          <div className="ml-[25px] w-[20px] h-[20px] rounded-full bg-[#eef2fa] border border-[#333] flex items-center justify-center text-[14px] font-bold text-[#3a4aa0]">?</div>
          <Tri c="ml-[8px] w-[5px]! h-[3px]!" />
        </div>
        <div className="flex-1 flex items-center pl-[51px]">
          <div className="w-[12px] h-px bg-[#555]" />
        </div>
      </div>

      {/* menu bar */}
      <div className="h-[25px] flex items-center gap-[28.500px] bg-linear-to-b from-[#565656] to-[#8a8a8a] text-[15px] text-[#d4d4d4] whitespace-nowrap overflow-hidden">
        <span className="-ml-[43px]">文件(F)</span>
        <span>编辑(E)</span>
        <span>视图(V)</span>
        <span>插入(I)</span>
        <span>格式(O)</span>
        <span>工具(T)</span>
        <span>绘图(D)</span>
        <span>标注(N)</span>
        <span>修改(M)</span>
        <span>参数(P)</span>
        <span>窗口(W)</span>
        <span>帮助(H)</span>
      </div>

      {/* file tabs */}
      <div className="h-[32px] flex items-end bg-[#373737] border-b border-[#2c2c2c]">
        <div className="w-[83px] h-[29px] rounded-tr-[10px] bg-[#434343]" />
        <div className="ml-[2px] w-[227px] h-[29px] rounded-t-[10px] bg-[#565656] flex items-center pl-[12px] text-[15px] text-[#dcdcdc] whitespace-nowrap">
          CAD菜单栏讲解之五 正交*
          <span className="ml-[16px] text-[13px] font-bold text-[#8a8a8a]">✕</span>
        </div>
        <div className="ml-[9px] mb-[4px] w-[26px] h-[22px] rounded-t-[6px] bg-[#4a4a4a] flex items-center justify-center text-[17px] font-bold text-[#cfcfcf]">+</div>
      </div>

      {/* toolbars */}
      <div className="h-[133px] flex flex-col bg-[#565656] text-[#222]">
        <div className="mt-[3px] h-[40px] flex items-center w-fit">
          <div className="w-[941px] h-full flex items-center border-y border-[#3e3e3e] border-r">
            {row1.map(([m, k], i) => (
              <Tool key={i} m={m} k={k} />
            ))}
          </div>
          <div className="w-[663px] h-full flex items-center border-y border-[#3e3e3e] border-r">
            <div className="ml-[3px] w-[4px] h-[22px] mb-[10px] shrink-0 [background-image:radial-gradient(#999_1px,transparent_1px)] [background-size:3px_3px]" />
            <Tool m="ml-[6px]" k="astyle" />
            <Combo c="ml-[6px] w-[120px]" label="Standard" />
            <div className="ml-[3px] w-px h-full bg-[#8a8a8a]" />
            <Tool m="ml-[6px]" k="dimbrush" />
            <Combo c="ml-[5px] w-[119px]" label="ISO-25" align="justify-center pr-[33px]" />
            <div className="ml-[5px] w-px h-full bg-[#8a8a8a]" />
            <Tool m="ml-[5px]" k="table" />
            <Combo c="ml-[5px] w-[120px]" label="Standard" align="justify-start pl-[5px]" />
            <div className="ml-[3px] w-px h-full bg-[#8a8a8a]" />
            <Tool m="ml-[7px]" k="mleader" />
            <Combo c="ml-[4px] w-[119px]" label="Standard" />
          </div>
        </div>
        <div className="mt-[3px] h-[40px] flex items-center w-fit">
          <div className="w-[367px] h-full flex items-center border-y border-[#3e3e3e]">
            <div className="shrink-0 w-[251px] h-[21px] mb-[16px] bg-[#dadada] relative flex items-center pl-[5px] text-[17px]">
              <svg viewBox="0 0 14 14" fill="none" className="w-[14px] h-[14px]">
                <rect x="1" y="6" width="9" height="7" stroke="#b08a2e" fill="#e6c468" />
                <path d="M6 6V3a3 3 0 0 1 6 0v2" stroke="#777" />
              </svg>
              <div className="ml-[3px] w-[10px] h-[10px] bg-white border border-[#222]" />
              <span className="ml-[5px]">0</span>
              <Chevron />
            </div>
            {row2.map(([m, k], i) => (
              <Tool key={i} m={m} k={k} />
            ))}
          </div>
          <div className="w-[980px] h-full flex items-center border-y border-r border-[#3e3e3e]">
            <div className="ml-[5px] w-[3px] h-[16px] mb-[16px] bg-[#3c3c3c] shrink-0" />
            {row2b.map(([m, k], i) => (
              <Tool key={i} m={m} k={k} />
            ))}
            <Combo c="ml-[3px] w-[119px]" label="ISO-25" align="justify-center pr-[33px]" />
            <Tool m="ml-[4px]" k="brushdim" />
          </div>
        </div>
        <div className="mt-[3px] h-[40px] w-[485px] flex items-center border-b border-r border-[#3e3e3e]">
          <LineCombo c="w-[62px]" line="w-0" text="" />
          <LineCombo c="ml-[6px] w-[160px]" line="w-[60px]" text="ByLayer" />
          <LineCombo c="ml-[6px] w-[124px]" line="w-[35px]" text="ByLayer" />
          <div className="ml-[7px] w-[119px] h-full flex flex-col">
            <div className="relative h-[22px] mt-[2px] bg-[#b8b8b8] flex items-center pl-[9px] text-[13px] text-[#888] [font-family:'Liberation_Mono',monospace]">
              ByColor
              <Chevron dim />
            </div>
          </div>
        </div>
      </div>

      {/* drawing canvas */}
      <div className="relative flex-1 bg-black overflow-hidden">
        <div className="absolute left-[481px] top-[104px] text-[226px] leading-[300px] font-black tracking-[4px] text-[#ffe93b] whitespace-nowrap">
          正交
        </div>

        {/* crosshair */}
        <svg viewBox="0 0 60 122" fill="none" stroke="#fff" className="absolute left-[697px] top-[201px] w-[60px] h-[122px]">
          <path d="M0 74H16M16 63V85H38V74H59M28 0V33M28 85V121" />
        </svg>

        {/* big ortho symbol */}
        <svg viewBox="0 0 192 192" className="absolute left-[990px] top-[143px] w-[192px] h-[192px]">
          <path d="M0 0H20V107H98V171H192V191H0zM20 126V171H79V126z" fill="#ffff00" fillRule="evenodd" />
        </svg>

        {/* red arrow */}
        <svg viewBox="0 0 38 113" className="absolute left-[1031px] top-[344px] w-[38px] h-[113px]">
          <path d="M19 0L37 40H29V113H9V40H0z" fill="#e60000" />
        </svg>

        {/* view cube */}
        <div className="absolute left-[1634px] top-[22px] w-[120px] h-[120px] rounded-full border-[14px] border-[#333]" />
        <div className="absolute left-[1668px] top-[56px] w-[51px] h-[52px] bg-[#a9a9a9] flex items-center justify-center">
          <div className="w-[33px] h-[30px] bg-[#9a9a9a] flex items-center justify-center text-[24px] font-light leading-none text-[#555]">上</div>
        </div>
        <span className="absolute left-[1685px] top-[16px] text-[18px] leading-[22px] text-[#b8b8b8]">北</span>
        <span className="absolute left-[1685px] top-[129px] text-[18px] leading-[22px] text-[#b8b8b8]">南</span>
        <span className="absolute left-[1628px] top-[72px] text-[18px] leading-[22px] text-[#b8b8b8]">西</span>
        <div className="absolute left-[1670px] top-[170px] w-[47px] h-[17px] rounded-[4px] bg-[#6e6e6e] flex items-center pl-[4px] text-[10px] text-[#aaa] [font-family:'Liberation_Sans',sans-serif]">
          WCS
        </div>

        {/* enlarged status strip */}
        <div className="absolute left-[440px] right-0 top-[463px] h-[164px] flex flex-col">
          <div className="h-[20px] flex">
            <div className="w-[1210px] bg-[#fafafa]" />
            <div className="flex-1 bg-black" />
          </div>
          <div className="h-[140px] bg-[#6a6a6a] pt-[11px] pl-[9px] flex items-start">
            <div className="shrink-0 w-[306px] h-[119px] border-[3px] border-[#7c7c7c] bg-[#555] flex items-center">
              <GridIcon c="shrink-0 ml-[21px] w-[70px] h-[70px] blur-[1px]" />
              <DotsIcon c="shrink-0 ml-[44px] w-[66px] h-[66px] blur-[0.7px]" />
              <Tri c="ml-[46px] w-[35px]! h-[20px]!" fill="#fff" />
            </div>
            <div className="shrink-0 ml-[8px] w-[119px] h-[119px] border-[3px] border-[#7c7c7c] bg-[#555] flex items-center">
              <SnapIcon c="shrink-0 ml-[24px] w-[70px] h-[70px] blur-[0.7px]" />
            </div>
            <div className="shrink-0 w-[119px] h-[119px] border-[3px] border-l-0 border-[#7c7c7c] bg-[#555] flex items-center">
              <DynIcon c="shrink-0 ml-[20px] w-[78px] h-[70px]" />
            </div>
            <div className="shrink-0 w-[492px] h-[119px] border-[3px] border-l-0 border-[#7c7c7c] bg-[#555] flex items-center">
              <OrthoIcon c="shrink-0 ml-[25px] w-[70px] h-[70px]" glow="drop-shadow-[0_0_4px_#1a5fb0]" />
              <PolarIcon c="shrink-0 ml-[44px] w-[72px] h-[72px] blur-[0.7px]" />
              <Tri c="ml-[37px] w-[35px]! h-[20px]!" fill="#fff" />
              <CrossIcon c="shrink-0 ml-[40px] w-[85px] h-[94px] blur-[0.7px]" />
              <Tri c="ml-[28px] w-[35px]! h-[20px]!" fill="#fff" />
            </div>
            <div className="flex-1 h-[119px] border-y-[3px] border-[#7c7c7c] bg-[#555] flex items-center overflow-hidden">
              <AngleIcon c="shrink-0 ml-[21px] w-[76px] h-[70px]" />
              <BoxIcon c="shrink-0 ml-[46px] w-[70px] h-[70px]" />
            </div>
          </div>
          <div className="h-[4px] bg-[#f0f0f0]" />
          <div className="absolute right-0 top-0 w-[75px] h-[27px] bg-black">
            <div className="ml-[59px] w-[4px] h-full bg-white" />
          </div>
        </div>

        {/* command line */}
        <div className="absolute left-0 bottom-0 w-[903px] h-[57px] flex flex-col">
          <div className="h-[28px] bg-linear-to-b from-[#6c6c6c] to-[#7e7e7e] border-b border-[#555] pl-[2px] pt-px flex items-center text-[18px] tracking-[0.35px] text-[#111] [font-family:'DejaVu_Sans_Mono','Noto_Sans_CJK_SC',monospace] whitespace-pre">
            令: _.erase 找到 1 个
          </div>
          <div className="relative flex-1 bg-[#a9a9a9] flex items-center text-[20px] italic text-[#777]">
            <div className="w-[17px] h-px bg-[#ddd] mb-[3px]" />
            <Tri c="-ml-[11px] mr-[10px] w-[6px]! h-[4px]!" fill="#444" />
            键入命令
            <Tri c="absolute right-[10px] top-[10px] rotate-180" fill="#222" />
          </div>
          <svg viewBox="0 0 14 14" fill="none" stroke="#ddd" className="absolute left-[21px] top-[22px] w-[14px] h-[14px]">
            <path d="M1 1L13 13M13 1L1 13" />
          </svg>
        </div>
      </div>

      {/* model tabs + status bar */}
      <div className="h-[35px] flex">
        <div className="shrink-0 w-[324px] bg-[#383838] flex items-start text-[15px] text-[#bdbdbd]">
          <div className="-ml-[18px] w-[63px] h-[25px] rounded-b-[6px] bg-[#4a4a4a] pl-[18px] flex items-center">布局1</div>
          <div className="ml-[3px] w-[61px] h-[25px] rounded-b-[6px] bg-[#4a4a4a] pl-[13px] flex items-center">布局2</div>
          <div className="ml-[5px] w-[25px] h-[22px] rounded-b-[5px] bg-[#4a4a4a] flex items-center justify-center font-bold text-[17px] text-[#ccc]">+</div>
        </div>
        <StatusBar />
      </div>

      <Taskbar />

      {/* sogou badge lies over the status bar */}
      <SogouS c="absolute left-[1601px] top-[992px] w-[39px] h-[39px]" />

      {/* video caption */}
      <div className="absolute left-[537px] top-[903px] text-[55.500px] leading-[66px] font-medium text-white whitespace-pre [word-spacing:3px] [-webkit-text-stroke:6px_#000] [paint-order:stroke_fill] [font-family:'Liberation_Sans','Noto_Sans_CJK_SC',sans-serif]">
        CAD菜单栏讲解之五  正交
      </div>
    </div>
  );
}
